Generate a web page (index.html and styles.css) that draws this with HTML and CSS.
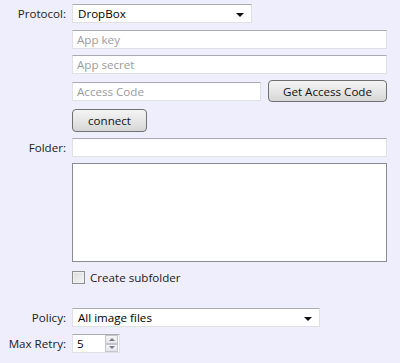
FILE: index.html
```html
<!DOCTYPE html>
<html>
<head>
<meta charset="utf-8">
<link rel="stylesheet" href="styles.css">
</head>
<body>
<div class="form">
  <div class="row r-proto">
    <span class="label">Protocol:</span>
    <div class="select w-proto"><span>DropBox</span><span class="caret"></span></div>
  </div>
  <div class="row r-key">
    <span class="label"></span>
    <div class="input w-full placeholder">App key</div>
  </div>
  <div class="row r-secret">
    <span class="label"></span>
    <div class="input w-full placeholder">App secret</div>
  </div>
  <div class="row r-code">
    <span class="label"></span>
    <div class="input w-code placeholder">Access Code</div>
    <button class="btn btn-get">Get Access Code</button>
  </div>
  <div class="row r-connect">
    <span class="label"></span>
    <button class="btn btn-connect">connect</button>
  </div>
  <div class="row r-folder">
    <span class="label">Folder:</span>
    <div class="input w-full"></div>
  </div>
  <div class="row r-area">
    <span class="label"></span>
    <div class="textarea"></div>
  </div>
  <div class="row r-check">
    <span class="label"></span>
    <span class="checkbox"></span>
    <span class="check-label">Create subfolder</span>
  </div>
  <div class="row r-policy">
    <span class="label">Policy:</span>
    <div class="select w-policy"><span>All image files</span><span class="caret"></span></div>
  </div>
  <div class="row r-retry">
    <span class="label">Max Retry:</span>
    <div class="spin">
      <span class="spin-val">5</span>
      <span class="spin-btns">
        <span class="spin-b"><span class="tri-up"></span></span>
        <span class="spin-b"><span class="tri-down"></span></span>
      </span>
    </div>
  </div>
</div>
</body>
</html>
```

FILE: styles.css
```css
html, body {
  margin: 0;
  padding: 0;
  background: #efeefc;
  width: 400px;
  height: 363px;
  overflow: hidden;
  font-family: "Open Sans", "Noto Sans", sans-serif;
  font-size: 11.6px;
  color: #1a1a1a;
}
.form {
  display: flex;
  flex-direction: column;
  padding-top: 4px;
}
.row {
  display: flex;
  align-items: center;
  line-height: 15px;
}
.label {
  width: 66px;
  flex: none;
  text-align: right;
  margin-right: 6px;
  color: #222;
}
.select, .input {
  box-sizing: border-box;
  height: 19px;
  background: #fff;
  border: 1px solid #dfdfe6;
  border-top-color: #aaaab0;
  display: flex;
  align-items: center;
  padding-left: 4px;
}
.select {
  justify-content: space-between;
  padding-left: 5px;
  padding-right: 7px;
  color: #000;
}
.caret {
  width: 0;
  height: 0;
  border-left: 4px solid transparent;
  border-right: 4px solid transparent;
  border-top: 4px solid #111;
  margin-top: 2px;
}
.w-proto { width: 180px; }
.w-policy { width: 248px; }
.w-full { width: 315px; }
.w-code { width: 189px; }
.placeholder { color: #9a9aa2; }
.r-key { margin-top: 7px; }
.r-secret { margin-top: 6px; }
.r-code { margin-top: 6px; height: 22px; }
.r-connect { margin-top: 7px; }
.r-folder { margin-top: 6px; }
.r-area { margin-top: 6px; }
.r-check { margin-top: 8px; }
.r-policy { margin-top: 23px; }
.r-retry { margin-top: 7px; }
.btn {
  box-sizing: border-box;
  font-family: inherit;
  font-size: 11.6px;
  color: #111;
  border: 1px solid #707070;
  border-radius: 4px;
  background: linear-gradient(#f4f4f4, #e6e6e6 50%, #d6d6d6);
  padding: 0;
  margin: 0;
}
.btn-get {
  width: 119px;
  height: 22px;
  margin-left: 7px;
}
.btn-connect {
  width: 75px;
  height: 23px;
}
.textarea {
  box-sizing: border-box;
  width: 315px;
  height: 99px;
  background: #fff;
  border: 1px solid #8a8a94;
}
.checkbox {
  box-sizing: border-box;
  width: 13px;
  height: 13px;
  border: 1px solid #8e8f8f;
  background: linear-gradient(135deg, #dcdcdc, #f6f6f6);
  box-shadow: inset 0 0 0 1px #f0f0f0;
}
.check-label {
  margin-left: 5px;
}
.spin {
  box-sizing: border-box;
  width: 48px;
  height: 19px;
  background: #fff;
  border: 1px solid #dfdfe6;
  border-top-color: #aaaab0;
  display: flex;
  align-items: stretch;
}
.spin-val {
  flex: 1;
  padding-left: 4px;
  display: flex;
  align-items: center;
  color: #000;
}
.spin-btns {
  display: flex;
  flex-direction: column;
  width: 13px;
  margin: 0 1px 0 0;
}
.spin-b {
  flex: 1;
  display: flex;
  align-items: center;
  justify-content: center;
  border: 1px solid #c4c4cc;
  background: linear-gradient(#f6f6f8, #e4e4ea);
}
.tri-up {
  width: 0; height: 0;
  border-left: 3px solid transparent;
  border-right: 3px solid transparent;
  border-bottom: 3px solid #7a7a88;
}
.tri-down {
  width: 0; height: 0;
  border-left: 3px solid transparent;
  border-right: 3px solid transparent;
  border-top: 3px solid #7a7a88;
}
```
